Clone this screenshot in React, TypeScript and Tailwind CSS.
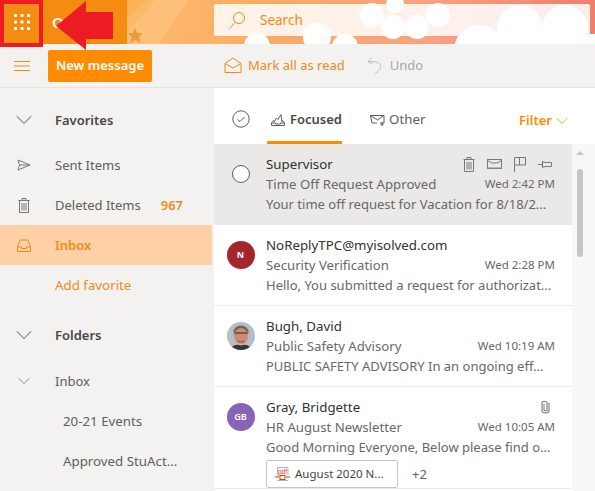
import React from "react";
import { ChevronDown } from "lucide-react";

const font = "font-['Noto_Sans','Open_Sans',sans-serif]";

// waffle dots
const Waffle = () => (
  <svg width="16" height="16" viewBox="0 0 16 16" fill="#fff">
    {[1.5, 8, 14.5].map((y) =>
      [1.5, 8, 14.5].map((x) => <rect key={`${x}-${y}`} x={x - 1.5} y={y - 1.5} width="3" height="3" rx="0.8" />)
    )}
  </svg>
);

// theme art of the banner, with the clouds
const BannerArt = () => (
  <svg className="absolute inset-0" width="468" height="44" viewBox="0 0 468 44">
    <defs>
      <linearGradient id="sky" x1="0" x2="1" y1="0" y2="0">
        <stop offset="0" stopColor="#fdbb6c" />
        <stop offset="0.3" stopColor="#fbab63" />
        <stop offset="0.65" stopColor="#f9a183" />
        <stop offset="1" stopColor="#ec7f6e" />
      </linearGradient>
    </defs>
    <rect width="468" height="44" fill="url(#sky)" />
    <path d="M0 0 H22 L0 18 Z" fill="#fdb25a" />
    <path d="M28 0 H62 L32 44 H0 V34 Z" fill="#fec078" />
    <path d="M8 28 L10.5 33 L16 33 L12 37 L14 43 L8.5 40 L3 43 L5 37 L1 33 L6 33 Z" fill="#ea9a40" />
  </svg>
);

const Clouds = () => (
  <svg className="absolute inset-0" width="468" height="44" viewBox="0 0 468 44" fill="#fff">
    <circle cx="130" cy="46" r="13" />
    <circle cx="190" cy="37" r="14" />
    <circle cx="218" cy="47" r="13" />
    <circle cx="245" cy="15" r="12" />
    <circle cx="266" cy="27" r="12" />
    <circle cx="290" cy="27" r="12" />
    <circle cx="311" cy="15" r="12" />
    <circle cx="268" cy="4" r="9" />
    <circle cx="352" cy="50" r="25" />
    <circle cx="393" cy="28" r="23" />
    <circle cx="438" cy="28" r="23" />
    <rect x="375" y="34" width="93" height="10" />
  </svg>
);

// little svg icons
const stroke = { fill: "none", stroke: "currentColor", strokeWidth: 1 };

const IconEnvelopeOpen = () => (
  <svg width="18" height="17" viewBox="0 0 18 17" {...stroke} className="text-[#f28a18]">
    <path d="M1 6.5 L9 1 L17 6.5 V15.5 H1 Z" />
    <path d="M1 6.5 L9 11 L17 6.5" />
  </svg>
);
const IconUndo = () => (
  <svg width="15" height="18" viewBox="0 0 15 18" {...stroke} className="text-[#c4c2c0]">
    <path d="M4.5 1 L1 5 L6 6.5" />
    <path d="M1 5 C6 3.5 14 5 14 9.5 C14 12 11 14 8 17" />
  </svg>
);
const IconSend = () => (
  <svg width="14" height="12" viewBox="0 0 14 12" {...stroke}>
    <path d="M1 1 L13 6 L1 11 L2.5 6 Z" />
    <path d="M2.5 6 H13" />
  </svg>
);
const IconTrash = ({ className }: { className?: string }) => (
  <svg width="12" height="15" viewBox="0 0 12 15" {...stroke} className={className}>
    <path d="M0.5 2.5 H11.5 M4 2.5 V0.5 H8 V2.5 M1.5 2.5 V14.5 H10.5 V2.5" />
    <path d="M4 5 V12.5 M6 5 V12.5 M8 5 V12.5" />
  </svg>
);
const IconInbox = () => (
  <svg width="14" height="13" viewBox="0 0 14 13" {...stroke}>
    <path d="M3 1 H11 L13.5 8 V12.5 H0.5 V8 Z" />
    <path d="M0.5 8 H4.5 V9.5 H9.5 V8 H13.5" />
  </svg>
);
const IconCheckCircle = () => (
  <svg width="18" height="18" viewBox="0 0 18 18" {...stroke} className="text-[#605e5c]">
    <circle cx="9" cy="9" r="8.2" />
    <path d="M5.5 9.5 L8 11.5 L12.5 7" />
  </svg>
);
const IconFocused = () => (
  <svg width="14" height="12" viewBox="0 0 14 12" {...stroke} className="text-[#605e5c]">
    <path d="M3 6 L0.5 9 V11.5 H13.5 V9 L11 6" />
    <path d="M3 8 L5.5 4 L7 5.5 L10 0.5 L11 8" />
    <path d="M0.5 9 H4.5 V10 H9.5 V9 H13.5" />
  </svg>
);
const IconOther = () => (
  <svg width="15" height="12" viewBox="0 0 15 12" {...stroke} className="text-[#605e5c]">
    <path d="M0.5 1.5 H14 V9 H10 M7 9 H2 L0.5 1.5" />
    <path d="M0.5 1.5 L7.5 6 L14 1.5" />
    <path d="M12 8 V11.5 M10.5 10 L12 11.5 L13.5 10" />
  </svg>
);
const IconMail = () => (
  <svg width="15" height="10" viewBox="0 0 15 10" {...stroke}>
    <rect x="0.5" y="0.5" width="14" height="9" />
    <path d="M0.5 1.5 L5 4 H10 L14.5 1.5" />
    <path d="M0.5 8.8 H14.5" stroke="#a19f9d" />
  </svg>
);
const IconFlag = () => (
  <svg width="12" height="15" viewBox="0 0 12 15" {...stroke}>
    <path d="M0.5 15 V0.5 H11.5 V8 H0.5 M5.5 0.5 V8" />
  </svg>
);
const IconPin = () => (
  <svg width="14" height="9" viewBox="0 0 14 9" {...stroke}>
    <path d="M0 4.5 H4 M4.5 1 V8 M4.5 2 L8 2.5 H13.5 V6.5 H8 L4.5 7" />
  </svg>
);
const IconClip = () => (
  <svg width="9" height="14" viewBox="0 0 9 14" {...stroke} strokeWidth={1.1} className="text-[#7a7876]">
    <path d="M3 3.5 V10 C3 11.2 6 11.2 6 10 V2.8 C6 0.8 1 0.6 1 3 V10.5 C1 13.8 8 13.8 8 10.5 V3" />
  </svg>
);
const IconPdf = () => (
  <svg width="15" height="15" viewBox="0 0 15 15">
    <path d="M2.5 8 V0.5 H13 V8" fill="none" stroke="#a19f9d" strokeWidth="0.8" />
    <text x="7.5" y="7" textAnchor="middle" fontSize="6.5" fill="#d13438" fontFamily="Liberation Sans, sans-serif">pdf</text>
    <path d="M0 10 H4 M11 10 H15" stroke="#d83b01" strokeWidth="1.2" />
    <rect x="5" y="8.5" width="5" height="4" fill="none" stroke="#d83b01" strokeWidth="1" />
    <path d="M2 13.5 H13" stroke="#a19f9d" strokeWidth="0.8" />
  </svg>
);

// drawn stand-in for the profile photo
const Face = () => (
  <svg width="28" height="28" viewBox="0 0 28 28" className="rounded-full">
    <rect width="28" height="28" fill="#b4bec6" />
    <ellipse cx="14" cy="10" rx="7.5" ry="6.5" fill="#6d625a" />
    <ellipse cx="14" cy="14" rx="7" ry="8" fill="#d08a70" />
    <path d="M8 11 H20" stroke="#5a4a40" strokeWidth="1.4" />
    <path d="M10.5 19 C12 20 16 20 17.5 19" stroke="#9a5a48" strokeWidth="1.2" fill="none" />
    <path d="M3 28 C5 23 10 22 14 23.5 C18 22 23 23 25 28 Z" fill="#3a3634" />
  </svg>
);

const NavRow = ({
  icon,
  label,
  badge,
  active,
  bold,
}: {
  icon?: React.ReactNode;
  label: string;
  badge?: string;
  active?: boolean;
  bold?: boolean;
}) => (
  <div className={`flex h-10 items-center text-[13px] ${active ? "bg-[#fed0a5] text-[#f28a18] font-semibold" : bold ? "text-[#484644] font-semibold" : "text-[#605e5c]"}`}>
    <div className={`flex w-[47px] justify-center ${active ? "" : "text-[#797775]"}`}>{icon}</div>
    <div className="w-2" />
    <span className="truncate pt-[2px]">{label}</span>
    {badge && <span className="ml-5 pt-[2px] font-semibold text-[#f28a18]">{badge}</span>}
  </div>
);

const MailRow = ({
  avatar,
  sender,
  subject,
  time,
  preview,
  selected,
  right,
  extra,
}: {
  avatar: React.ReactNode;
  sender: string;
  subject: string;
  time: string;
  preview: string;
  selected?: boolean;
  right?: React.ReactNode;
  extra?: React.ReactNode;
}) => (
  <div className={`flex min-h-[81px] shrink-0 border-b border-[#edebe9] pt-[10px] ${selected ? "bg-[#ebe9e7]" : "bg-white"}`}>
    <div className="flex h-10 w-[52px] shrink-0 items-center justify-center pl-[1px]">{avatar}</div>
    <div className="flex w-[289px] min-w-0 flex-col text-[13.2px] leading-5">
      <div className="flex h-5 items-center justify-between">
        <span className="text-[13.3px] text-[#323130]">{sender}</span>
        {right}
      </div>
      <div className="flex h-5 items-center justify-between text-[#69676a]">
        <span>{subject}</span>
        <span className="text-[11.5px]">{time}</span>
      </div>
      <div className="h-5 whitespace-nowrap text-[13px] text-[#69676a]">{preview}</div>
      {extra}
    </div>
  </div>
);

export default function App() {
  return (
    <div className={`relative flex h-[491px] w-[595px] flex-col overflow-hidden bg-[#f3f2f1] ${font}`}>
      {/* banner */}
      <header className="flex h-11 shrink-0">
        <div className="flex w-[127px] shrink-0 items-center bg-[#f58c12]">
          <div className="flex h-11 w-11 shrink-0 items-center justify-center">
            <Waffle />
          </div>
          <span className="ml-2 text-[15px] font-semibold text-white">Outlook</span>
        </div>
        <div className="relative flex-1 overflow-hidden">
          <BannerArt />
          <div className="relative z-0 ml-[87px] mt-1 flex h-[32px] w-[376px] items-center gap-[15px] rounded-[2px] bg-white/85 pl-[15px] text-[13.5px] text-[#f28a18]">
            <svg width="16" height="17" viewBox="0 0 16 17" fill="none" stroke="#e8862a" strokeWidth="1" className="shrink-0">
              <circle cx="10" cy="6" r="5.5" />
              <path d="M6 10.5 L0.5 16.5" />
            </svg>
            <span>Search</span>
          </div>
          <Clouds />
        </div>
      </header>

      {/* toolbar */}
      <div className="flex h-11 shrink-0 items-center border-b border-[#e6e4e2]">
        <div className="flex w-12 justify-center pr-1">
          <svg width="16" height="10" viewBox="0 0 16 10" stroke="#f28a18" strokeWidth="1">
            <path d="M0 0.5 H16 M0 5 H16 M0 9.5 H16" />
          </svg>
        </div>
        <button className="h-8 w-[104px] rounded-[2px] bg-[#ff8c00] text-[13px] font-semibold text-white">New message</button>
        <div className="ml-[72px] flex items-center gap-[6px] text-[13px] text-[#f28a18]">
          <IconEnvelopeOpen />
          <span className="pt-[1px]">Mark all as read</span>
        </div>
        <div className="ml-[22px] flex items-center gap-2 text-[13px] text-[#a8a6a4]">
          <IconUndo />
          <span className="pt-[1px]">Undo</span>
        </div>
      </div>

      <div className="flex min-h-0 flex-1">
        {/* folders */}
        <nav className="w-[212px] shrink-0 pt-3">
          <NavRow bold label="Favorites" icon={<ChevronDown size={28} strokeWidth={0.9} />} />
          <div className="h-[5px]" />
          <NavRow label="Sent Items" icon={<IconSend />} />
          <NavRow label="Deleted Items" badge="967" icon={<IconTrash />} />
          <NavRow active label="Inbox" icon={<IconInbox />} />
          <div className="flex h-10 items-center pl-[55px] pt-[2px] text-[13.3px] text-[#f28a18]">Add favorite</div>
          <div className="h-[10px]" />
          <NavRow bold label="Folders" icon={<ChevronDown size={28} strokeWidth={0.9} />} />
          <div className="h-[6px]" />
          <NavRow label="Inbox" icon={<ChevronDown size={20} strokeWidth={1} />} />
          <div className="flex h-10 items-center pl-[63px] pt-[2px] text-[13.3px] text-[#605e5c]">20-21 Events</div>
          <div className="flex h-10 items-center pl-[63px] pt-[2px] text-[13.3px] text-[#605e5c]">Approved StuAct...</div>
        </nav>

        {/* message list */}
        <main className="ml-[2px] flex min-w-0 flex-1 flex-col bg-white">
          <div className="flex h-14 w-[358px] shrink-0">
            <div className="flex w-[52px] items-center justify-center pl-[1px] pt-[6px]">
              <IconCheckCircle />
            </div>
            <div className="ml-[1px] flex h-full w-[75px] items-center justify-center gap-[5px] border-b-[3px] border-[#ff8c00] pl-1 pt-[11px] text-[13px] font-semibold text-[#484644]">
              <IconFocused />
              <span>Focused</span>
            </div>
            <div className="ml-[28px] flex items-center gap-1 pt-[8px] text-[13.3px] text-[#605e5c]">
              <IconOther />
              <span>Other</span>
            </div>
            <div className="ml-auto flex items-center pt-[10px] text-[13px] font-semibold text-[#ff8c00]">
              <span>Filter</span>
              <ChevronDown size={20} strokeWidth={1} />
            </div>
          </div>
          <div className="flex min-h-0 flex-1">
            <div className="flex w-[358px] shrink-0 flex-col overflow-hidden">
              <MailRow
                selected
                avatar={<div className="h-[18px] w-[18px] rounded-full border border-[#605e5c] bg-white" />}
                sender="Supervisor"
                subject="Time Off Request Approved"
                time="Wed 2:42 PM"
                preview="Your time off request for Vacation for 8/18/2..."
                right={
                  <div className="flex items-center gap-[12px] pr-[3px] text-[#7a7876]">
                    <IconTrash />
                    <IconMail />
                    <IconFlag />
                    <IconPin />
                  </div>
                }
              />
              <MailRow
                avatar={<div className="flex h-[28px] w-[28px] items-center justify-center rounded-full bg-[#a4262c] text-[9px] font-bold text-white">N</div>}
                sender="NoReplyTPC@myisolved.com"
                subject="Security Verification"
                time="Wed 2:28 PM"
                preview="Hello, You submitted a request for authorizat..."
              />
              <MailRow
                avatar={<Face />}
                sender="Bugh, David"
                subject="Public Safety Advisory"
                time="Wed 10:19 AM"
                preview="PUBLIC SAFETY ADVISORY In an ongoing eff..."
              />
              <MailRow
                avatar={<div className="flex h-[28px] w-[28px] items-center justify-center rounded-full bg-[#8764b8] text-[9px] font-semibold text-white">GB</div>}
                sender="Gray, Bridgette"
                subject="HR August Newsletter"
                time="Wed 10:05 AM"
                preview="Good Morning Everyone, Below please find o..."
                right={<div className="pr-[5px]"><IconClip /></div>}
                extra={
                  <div className="mt-[3px] flex items-center">
                    <div className="flex h-7 w-[132px] items-center gap-[5px] rounded-[2px] border border-[#c8c6c4] pl-2 text-[11.5px] text-[#484644]">
                      <IconPdf />
                      <span>August 2020 N...</span>
                    </div>
                    <span className="ml-[14px] text-[13px] text-[#605e5c]">+2</span>
                  </div>
                }
              />
            </div>
            {/* scrollbar */}
            <div className="flex flex-1 flex-col items-center bg-[#f8f7f6] pl-[4px] pr-[13px] pt-[7px]">
              <div className="h-0 w-0 border-x-[4px] border-b-[4px] border-x-transparent border-b-[#c8c6c4]" />
              <div className="mt-[14px] h-[88px] w-[6px] rounded-full bg-[#c8c6c4]" />
            </div>
          </div>
        </main>
      </div>

      {/* red annotation: box and arrow lying over the banner */}
      <div className="absolute left-0 top-0 h-[47px] w-[43px] border-[4px] border-[#ed1c24]" />
      <svg className="absolute left-[56px] top-0" width="58" height="50" viewBox="0 0 58 50" fill="#ed1c24">
        <path d="M0 26 L30 1 V12 H57 V39 H30 V50 Z" />
      </svg>
    </div>
  );
}
